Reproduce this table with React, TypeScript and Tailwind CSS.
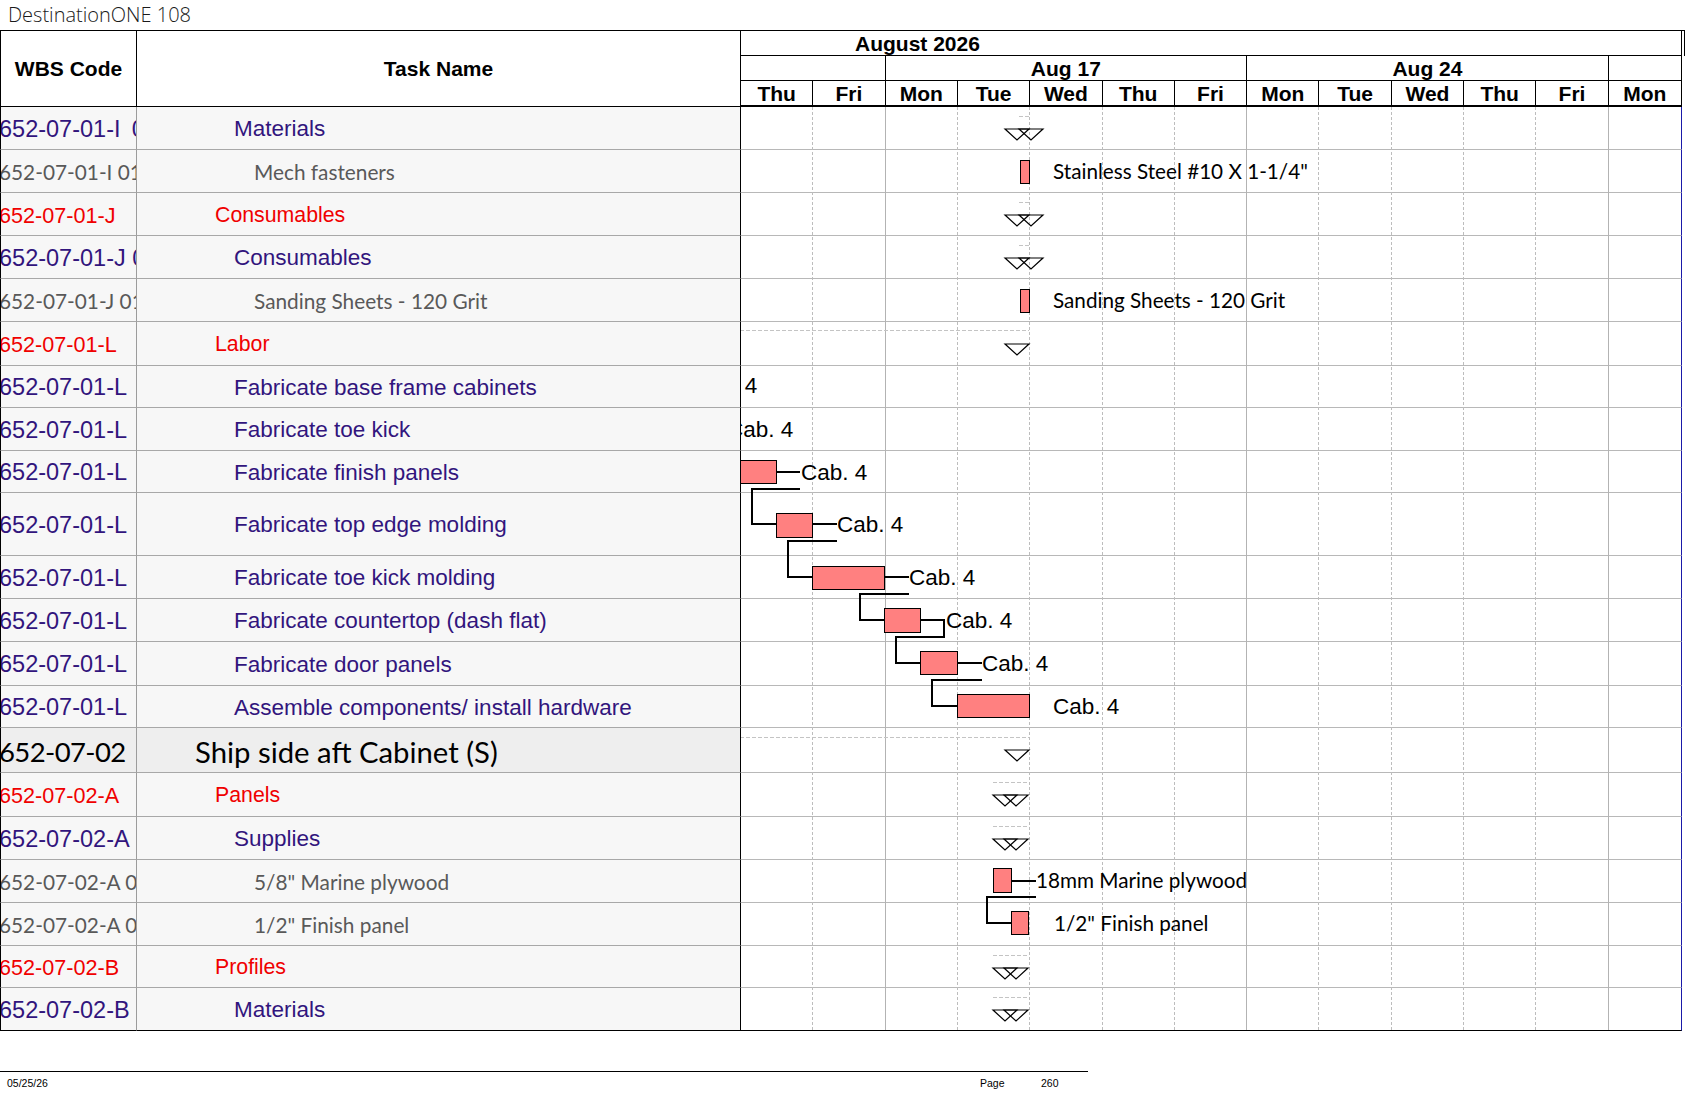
import React from 'react'

type Kind = 'red' | 'purple' | 'gray' | 'big'

interface Row {
  wbs: string
  name: string
  kind: Kind
  h: string
}

const rows: Row[] = [
  { wbs: '652-07-01-I \u200901', name: 'Materials', kind: 'purple', h: 'h-[43px]' },
  { wbs: '652-07-01-I 01-001', name: 'Mech fasteners', kind: 'gray', h: 'h-[43px]' },
  { wbs: '652-07-01-J', name: 'Consumables', kind: 'red', h: 'h-[43px]' },
  { wbs: '652-07-01-J 01', name: 'Consumables', kind: 'purple', h: 'h-[43px]' },
  { wbs: '652-07-01-J 01-001', name: 'Sanding Sheets - 120 Grit', kind: 'gray', h: 'h-[43px]' },
  { wbs: '652-07-01-L', name: 'Labor', kind: 'red', h: 'h-[44px]' },
  { wbs: '652-07-01-L', name: 'Fabricate base frame cabinets', kind: 'purple', h: 'h-[42px]' },
  { wbs: '652-07-01-L', name: 'Fabricate toe kick', kind: 'purple', h: 'h-[43px]' },
  { wbs: '652-07-01-L', name: 'Fabricate finish panels', kind: 'purple', h: 'h-[42px]' },
  { wbs: '652-07-01-L', name: 'Fabricate top edge molding', kind: 'purple', h: 'h-[63px]' },
  { wbs: '652-07-01-L', name: 'Fabricate toe kick molding', kind: 'purple', h: 'h-[43px]' },
  { wbs: '652-07-01-L', name: 'Fabricate countertop (dash flat)', kind: 'purple', h: 'h-[43px]' },
  { wbs: '652-07-01-L', name: 'Fabricate door panels', kind: 'purple', h: 'h-[44px]' },
  { wbs: '652-07-01-L', name: 'Assemble components/ install hardware', kind: 'purple', h: 'h-[42px]' },
  { wbs: '652-07-02', name: 'Ship side aft Cabinet (S)', kind: 'big', h: 'h-[45px]' },
  { wbs: '652-07-02-A', name: 'Panels', kind: 'red', h: 'h-[44px]' },
  { wbs: '652-07-02-A', name: 'Supplies', kind: 'purple', h: 'h-[43px]' },
  { wbs: '652-07-02-A 01', name: '5/8" Marine plywood', kind: 'gray', h: 'h-[43px]' },
  { wbs: '652-07-02-A 02', name: '1/2" Finish panel', kind: 'gray', h: 'h-[43px]' },
  { wbs: '652-07-02-B', name: 'Profiles', kind: 'red', h: 'h-[42px]' },
  { wbs: '652-07-02-B', name: 'Materials', kind: 'purple', h: 'h-[43px]' },
]

const arial = "font-['Liberation_Sans',Arial,sans-serif]"
const calibri = "font-['Lato','Noto_Sans',sans-serif]"

const codeStyle: Record<Kind, string> = {
  red: `${arial} text-[21.6px] text-[#f00000]`,
  purple: `${arial} text-[23.5px] text-[#32157d]`,
  gray: `${calibri} text-[20.8px] text-[#595959]`,
  big: `${calibri} text-[27.5px] tracking-[-0.6px] text-black`,
}

const nameStyle: Record<Kind, string> = {
  red: `${arial} text-[21.3px] text-[#f00000] pl-[78px]`,
  purple: `${arial} text-[22.5px] text-[#32157d] pl-[97px]`,
  gray: `${calibri} text-[20.8px] text-[#595959] pl-[117px]`,
  big: `${calibri} text-[29.3px] text-black pl-[58px]`,
}

const days = ['Thu', 'Fri', 'Mon', 'Tue', 'Wed', 'Thu', 'Fri', 'Mon', 'Tue', 'Wed', 'Thu', 'Fri', 'Mon']

// week boundaries fall before the Mondays (columns 2, 7, 12)
const gridCols = days.map((_, i) =>
  i === days.length - 1
    ? ''
    : i === 1 || i === 6 || i === 11
    ? 'border-r border-[#b3b3b3]'
    : 'border-r border-dashed border-[#bdbdbd]',
)

// gantt drawing, in page coordinates (translated inside the svg)
const bars = [
  [1020, 160, 1029, 183],
  [1020, 289, 1029, 312],
  [734, 460, 776, 483],
  [776, 513, 812, 537],
  [812, 566, 884, 589],
  [884, 608, 920, 632],
  [920, 651, 957, 674],
  [957, 694, 1029, 717],
  [993, 868, 1011, 892],
  [1011, 911, 1028, 934],
]

const links = [
  '776,472 800,472',
  '800,489 752,489 752,524 776,524',
  '812,524 837,524',
  '837,541 788,541 788,577 812,577',
  '884,577 909,577',
  '909,594 860,594 860,620 884,620',
  '920,620 944,620 944,637 896,637 896,663 920,663',
  '957,663 982,663',
  '982,680 932,680 932,706 957,706',
  '1011,881 1036,881',
  '1036,897 987,897 987,923 1011,923',
]

const dashes = [
  [1019, 116, 1029],
  [1019, 202, 1029],
  [1019, 245, 1029],
  [740, 330, 1029],
  [740, 737, 1029],
  [993, 782, 1029],
  [993, 826, 1029],
  [993, 955, 1029],
  [993, 997, 1029],
]

// [left, right, top] of each summary triangle
const tris = [
  [1005, 1029, 129], [1019, 1043, 129],
  [1005, 1029, 215], [1019, 1043, 215],
  [1005, 1029, 258], [1019, 1043, 258],
  [1005, 1029, 344],
  [1005, 1029, 750],
  [993, 1017, 795], [1004, 1028, 795],
  [993, 1017, 839], [1004, 1028, 839],
  [993, 1017, 968], [1004, 1028, 968],
  [993, 1017, 1010], [1004, 1028, 1010],
]

const cabLabels = [
  [691, 393],
  [727, 437],
  [801, 480],
  [837, 532],
  [909, 585],
  [946, 628],
  [982, 671],
  [1053, 714],
]

const noteLabels: [number, number, string][] = [
  [1053, 179, 'Stainless Steel #10 X 1-1/4"'],
  [1053, 308, 'Sanding Sheets - 120 Grit'],
  [1036, 888, '18mm Marine plywood'],
  [1054, 931, '1/2" Finish panel'],
]

function GanttDrawing() {
  return (
    <svg className="absolute left-[741px] top-0 w-[940px] h-[923px] overflow-hidden" shapeRendering="crispEdges">
      <g transform="translate(-741,-107)">
        {dashes.map(([x1, y, x2], i) => (
          <line key={i} x1={x1} y1={y + 0.5} x2={x2} y2={y + 0.5} stroke="#c4c4c4" strokeDasharray="4 2" />
        ))}
        {links.map((p, i) => (
          <polyline key={i} points={p} fill="none" stroke="#000" strokeWidth={1.2} />
        ))}
        {bars.map(([x1, y1, x2, y2], i) => (
          <rect key={i} x={x1 + 0.5} y={y1 + 0.5} width={x2 - x1} height={y2 - y1} fill="#ff8080" stroke="#000" strokeWidth={1.3} />
        ))}
        {tris.map(([l, r, t], i) => (
          <polygon
            key={i}
            points={`${l},${t} ${r},${t} ${(l + r) / 2},${t + 11}`}
            fill="none"
            stroke="#000"
            strokeWidth={1.2}
            shapeRendering="geometricPrecision"
          />
        ))}
        {cabLabels.map(([x, y], i) => (
          <text key={i} x={x} y={y} fontFamily="Liberation Sans, Arial, sans-serif" fontSize={22.5} fill="#000">
            Cab. 4
          </text>
        ))}
        {noteLabels.map(([x, y, t], i) => (
          <text key={i} x={x} y={y} fontFamily="Lato, Noto Sans, sans-serif" fontSize={20.7} fill="#000">
            {t}
          </text>
        ))}
      </g>
    </svg>
  )
}

export default function App() {
  return (
    <div className={`w-[1687px] h-[1097px] bg-white overflow-hidden ${arial}`}>
      {/* Page title */}
      <div className="h-[30px] pl-[8px] flex items-center text-[20px] font-['Open_Sans',sans-serif] font-light text-[#1a1a1a]">
        DestinationONE 108
      </div>

      {/* Header */}
      <div className="flex h-[77px] w-[1685px] border-t border-black">
        <div className="w-[137px] shrink-0 border-l border-r border-b border-black flex items-center justify-center font-bold text-[21px] text-black">
          WBS Code
        </div>
        <div className="w-[604px] shrink-0 border-r border-b border-black flex items-center justify-center font-bold text-[21px] text-black">
          Task Name
        </div>
        <div className="w-[941px] shrink-0 border-r border-black flex flex-col font-bold text-[21px] text-black leading-none">
          <div className="h-[25px] border-b border-black flex items-center pl-[114px]">August 2026</div>
          <div className="h-[25px] border-b border-black grid grid-cols-13">
            <div className="col-span-2 border-r border-black" />
            <div className="col-span-5 border-r border-black flex items-center justify-center">Aug 17</div>
            <div className="col-span-5 border-r border-black flex items-center justify-center">Aug 24</div>
            <div className="col-span-1" />
          </div>
          <div className="h-[26px] border-b-2 border-black grid grid-cols-13">
            {days.map((d, i) => (
              <div
                key={i}
                className={`flex items-center justify-center ${i === days.length - 1 ? '' : 'border-r border-black'}`}
              >
                {d}
              </div>
            ))}
          </div>
        </div>
        <div className="w-[3px] h-[25px] border-r border-black" />
      </div>

      {/* Body */}
      <div className="relative flex flex-col w-[1682px]">
        {rows.map((r, i) => {
          const last = i === rows.length - 1
          const bb = last ? 'border-b-black' : 'border-b-[#a8a8a8]'
          const bg = r.kind === 'big' ? 'bg-[#eeeeee]' : 'bg-[#f7f7f7]'
          return (
            <div key={i} className={`flex ${r.h}`}>
              <div
                className={`w-[137px] shrink-0 border-l border-l-black border-r border-r-[#9c9c9c] border-b ${bb} ${bg} overflow-hidden whitespace-pre flex items-center pt-[3px]`}
              >
                <span className={`-ml-[2px] leading-none ${codeStyle[r.kind]}`}>{r.wbs}</span>
              </div>
              <div
                className={`w-[604px] shrink-0 border-r border-r-black border-b ${bb} ${bg} overflow-hidden whitespace-nowrap flex items-center pt-[3px]`}
              >
                <span className={`leading-none ${nameStyle[r.kind]}`}>{r.name}</span>
              </div>
              <div
                className={`w-[941px] shrink-0 border-r border-r-[#1a1aa8] border-b ${last ? 'border-b-black' : 'border-b-[#b8b8b8]'}`}
              />
            </div>
          )
        })}

        {/* day grid lines */}
        <div className="absolute left-[741px] top-0 bottom-[1px] w-[940px] grid grid-cols-13 pointer-events-none">
          {gridCols.map((c, i) => (
            <div key={i} className={c} />
          ))}
        </div>

        <GanttDrawing />
      </div>

      {/* Footer */}
      <div className="mt-[40px] w-[1088px] border-t border-black flex pt-[6px] text-[10.5px] leading-none text-black">
        <span className="pl-[7px] w-[980px]">05/25/26</span>
        <span className="w-[61px]">Page</span>
        <span>260</span>
      </div>
    </div>
  )
}
